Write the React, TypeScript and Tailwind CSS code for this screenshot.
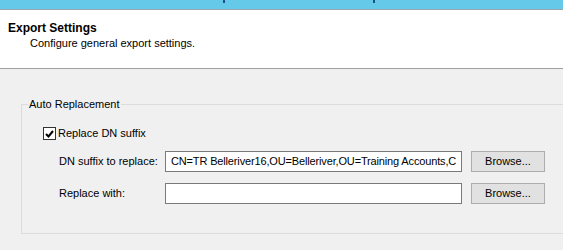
export default function App() {
  return (
    <div
      className="w-[563px] h-[250px] overflow-hidden bg-[#f0f0f0] text-[11px] text-black"
      style={{ fontFamily: '"Liberation Sans", Arial, sans-serif' }}
    >
      {/* wizard banner strip */}
      <div className="flex h-[10px] bg-[#65c9ea] border-b border-[#9aa6ab]">
        <div className="ml-[223px] w-[2px] h-[3px] bg-[#1d4f8f]" />
        <div className="ml-[148px] w-[2px] h-[3px] bg-[#1d4f8f]" />
      </div>

      <div className="h-[59px] bg-white border-b border-[#a0a0a0] pt-[11px]">
        <div className="pl-[8px] text-[12px] font-bold leading-[15px]">Export Settings</div>
        <div className="pl-[30px] leading-[15px]">Configure general export settings.</div>
      </div>

      <fieldset className="ml-[21px] mt-[28px] w-[560px] border border-[#dcdcdc] px-0 pb-[29px]">
        <legend className="ml-[6px] px-[1px] leading-[14px]">Auto Replacement</legend>

        <div className="pl-[21px] pt-[16px]">
          <label className="flex items-center gap-[2px] h-[13px]">
            <span className="flex items-center justify-center w-[13px] h-[13px] bg-white border border-[#333]">
              <svg width="9" height="8" viewBox="0 0 9 8">
                <path d="M1 4 L3.5 6.5 L8 1" fill="none" stroke="#000" strokeWidth="2" />
              </svg>
            </span>
            <span>Replace DN suffix</span>
          </label>
        </div>

        <div className="flex flex-col gap-[11px] pt-[11px]">
          <div className="flex items-center h-[21px]">
            <span className="w-[143px] pl-[37px]">DN suffix to replace:</span>
            <div className="w-[297px] h-[21px] bg-white border border-[#7a7a7a] pl-[5px] pr-[2px] tracking-[-0.15px] leading-[19px] whitespace-nowrap overflow-hidden">
              CN=TR Belleriver16,OU=Belleriver,OU=Training Accounts,C
            </div>
            <button className="ml-[9px] w-[74px] h-[21px] bg-[#e1e1e1] border border-[#adadad] leading-[19px]">
              Browse...
            </button>
          </div>
          <div className="flex items-center h-[21px]">
            <span className="w-[143px] pl-[37px]">Replace with:</span>
            <div className="w-[297px] h-[21px] bg-white border border-[#7a7a7a]" />
            <button className="ml-[9px] w-[74px] h-[21px] bg-[#e1e1e1] border border-[#adadad] leading-[19px]">
              Browse...
            </button>
          </div>
        </div>
      </fieldset>
    </div>
  );
}
